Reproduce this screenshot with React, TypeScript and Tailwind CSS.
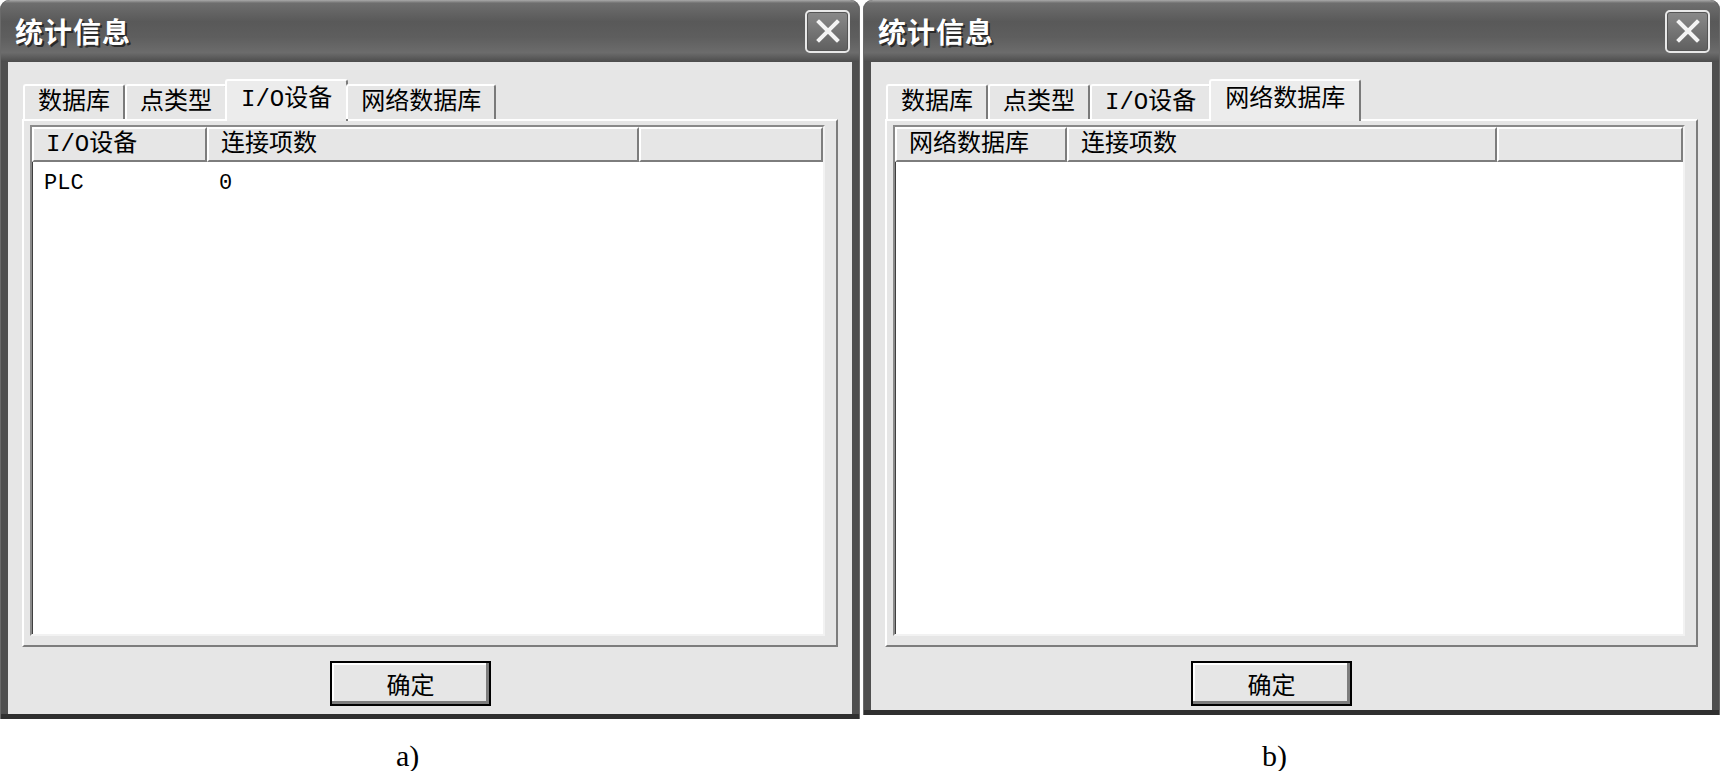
const CJK = '"Noto Sans CJK SC", "Noto Sans", sans-serif';
const MIXED = '"Liberation Mono", "Noto Sans CJK SC", monospace';

type Col = { label: string; width: number };

type DialogProps = {
  width: number;
  height: number;
  active: number;
  columns: Col[];
  rows: string[][];
  buttonLeft: number;
};

const tabs = ['数据库', '点类型', 'I/O设备', '网络数据库'];

const CloseButton = () => (
  <div className="w-[45px] h-[43px] rounded-[5px] border-2 border-[#e8e8e8] bg-[linear-gradient(to_bottom,#8a8a8a,#5f5f5f)] flex items-center justify-center shadow-[inset_0_0_0_1px_#555]">
    <svg width="28" height="28" viewBox="0 0 28 28">
      <path d="M5 5 L23 23 M23 5 L5 23" stroke="#f4f4f4" strokeWidth="4" strokeLinecap="square" />
    </svg>
  </div>
);

const Dialog = ({ width, height, active, columns, rows, buttonLeft }: DialogProps) => {
  return (
    <div
      className="flex flex-col rounded-t-[9px] bg-[#4f4f4f] border-l border-r border-[#6a6a6a] shadow-[inset_0_-5px_0_#2f2f2f]"
      style={{ width, height }}
    >
      {/* title bar */}
      <div className="h-[62px] shrink-0 rounded-t-[9px] flex items-center justify-between pl-[14px] pr-[9px] bg-[linear-gradient(to_bottom,#a9a9a9_0%,#6e6e6e_5%,#595959_35%,#5e5e5e_60%,#6c6c6c_85%,#4c4c4c_100%)]">
        <span
          className="text-[28px] font-bold text-white leading-none tracking-[1px] [text-shadow:2px_2px_0_#2a2a2a]"
          style={{ fontFamily: CJK }}
        >
          统计信息
        </span>
        <CloseButton />
      </div>

      {/* body */}
      <div className="flex-1 mx-[7px] mb-[5px] bg-[#e6e6e6] flex flex-col px-[14px] pt-[15px]">
        {/* tab strip */}
        <div className="flex items-end h-[42px] pl-[1px] relative z-10">
          {tabs.map((t, i) =>
            i === active ? (
              <div
                key={t}
                className="h-[42px] -mx-[2px] px-[14px] pt-[2px] bg-[#ececec] border-t-2 border-l-2 border-white border-r-2 border-r-[#7a7a7a] rounded-t-[3px] text-[24px] text-black flex items-start -mb-[2px]"
                style={{ fontFamily: MIXED }}
              >
                <span className="leading-[34px]">{t}</span>
              </div>
            ) : (
              <div
                key={t}
                className="h-[35px] px-[13px] bg-[#e6e6e6] border-t-2 border-l-2 border-white border-r-2 border-r-[#7a7a7a] rounded-t-[3px] text-[24px] text-black flex items-center"
                style={{ fontFamily: MIXED }}
              >
                <span className="leading-[30px]">{t}</span>
              </div>
            )
          )}
        </div>

        {/* tab panel */}
        <div className="h-[528px] bg-[#e6e6e6] border-t-2 border-l-2 border-white border-r-2 border-b-2 border-r-[#7d7d7d] border-b-[#7d7d7d] pl-[6px] pr-[11px] pt-[4px] pb-[9px] flex">
          {/* list view */}
          <div className="flex-1 flex flex-col bg-white border-t-2 border-l-2 border-[#8a8a8a] border-r-2 border-b-2 border-r-[#f2f2f2] border-b-[#f2f2f2] shadow-[inset_1px_1px_0_#3f3f3f]">
            <div className="flex h-[35px] shrink-0">
              {columns.map((c, i) => (
                <div
                  key={i}
                  className="h-full bg-[#e6e6e6] border-t-2 border-l-2 border-white border-r-2 border-b-2 border-r-[#7d7d7d] border-b-[#7d7d7d] px-[12px] flex items-center text-[24px] text-black"
                  style={i === columns.length - 1 ? { flex: 1 } : { width: c.width }}
                >
                  <span className="leading-none" style={{ fontFamily: MIXED }}>
                    {c.label}
                  </span>
                </div>
              ))}
            </div>
            <div className="flex flex-col pt-[8px]">
              {rows.map((r, ri) => (
                <div key={ri} className="flex h-[28px] items-center">
                  {r.map((cell, ci) => (
                    <div
                      key={ci}
                      className="px-[12px] text-[22px] text-black leading-none"
                      style={{ width: columns[ci].width, fontFamily: '"Liberation Mono", monospace' }}
                    >
                      {cell}
                    </div>
                  ))}
                </div>
              ))}
            </div>
          </div>
        </div>

        {/* footer */}
        <div className="flex pt-[14px]" style={{ paddingLeft: buttonLeft }}>
          <button className="w-[161px] h-[45px] border-2 border-black bg-[#e6e6e6] shadow-[inset_-3px_-3px_0_#7d7d7d,inset_2px_2px_0_#ffffff] flex items-center justify-center text-[24px] text-black">
            <span style={{ fontFamily: CJK }} className="leading-none">确定</span>
          </button>
        </div>
      </div>
    </div>
  );
};

export default function App() {
  return (
    <div className="w-[1720px] h-[771px] bg-white flex gap-[3px] overflow-hidden">
      <div className="flex flex-col">
        <Dialog
          width={860}
          height={722}
          active={2}
          columns={[
            { label: 'I/O设备', width: 175 },
            { label: '连接项数', width: 432 },
            { label: '', width: 191 },
          ]}
          rows={[['PLC', '0']]}
          buttonLeft={308}
        />
        <div
          className="mt-[22px] ml-[396px] text-[30px] leading-none text-black"
          style={{ fontFamily: '"Liberation Serif", serif' }}
        >
          a)
        </div>
      </div>
      <div className="flex flex-col">
        <Dialog
          width={857}
          height={718}
          active={3}
          columns={[
            { label: '网络数据库', width: 172 },
            { label: '连接项数', width: 430 },
            { label: '', width: 181 },
          ]}
          rows={[]}
          buttonLeft={306}
        />
        <div
          className="mt-[26px] ml-[399px] text-[30px] leading-none text-black"
          style={{ fontFamily: '"Liberation Serif", serif' }}
        >
          b)
        </div>
      </div>
    </div>
  );
}
